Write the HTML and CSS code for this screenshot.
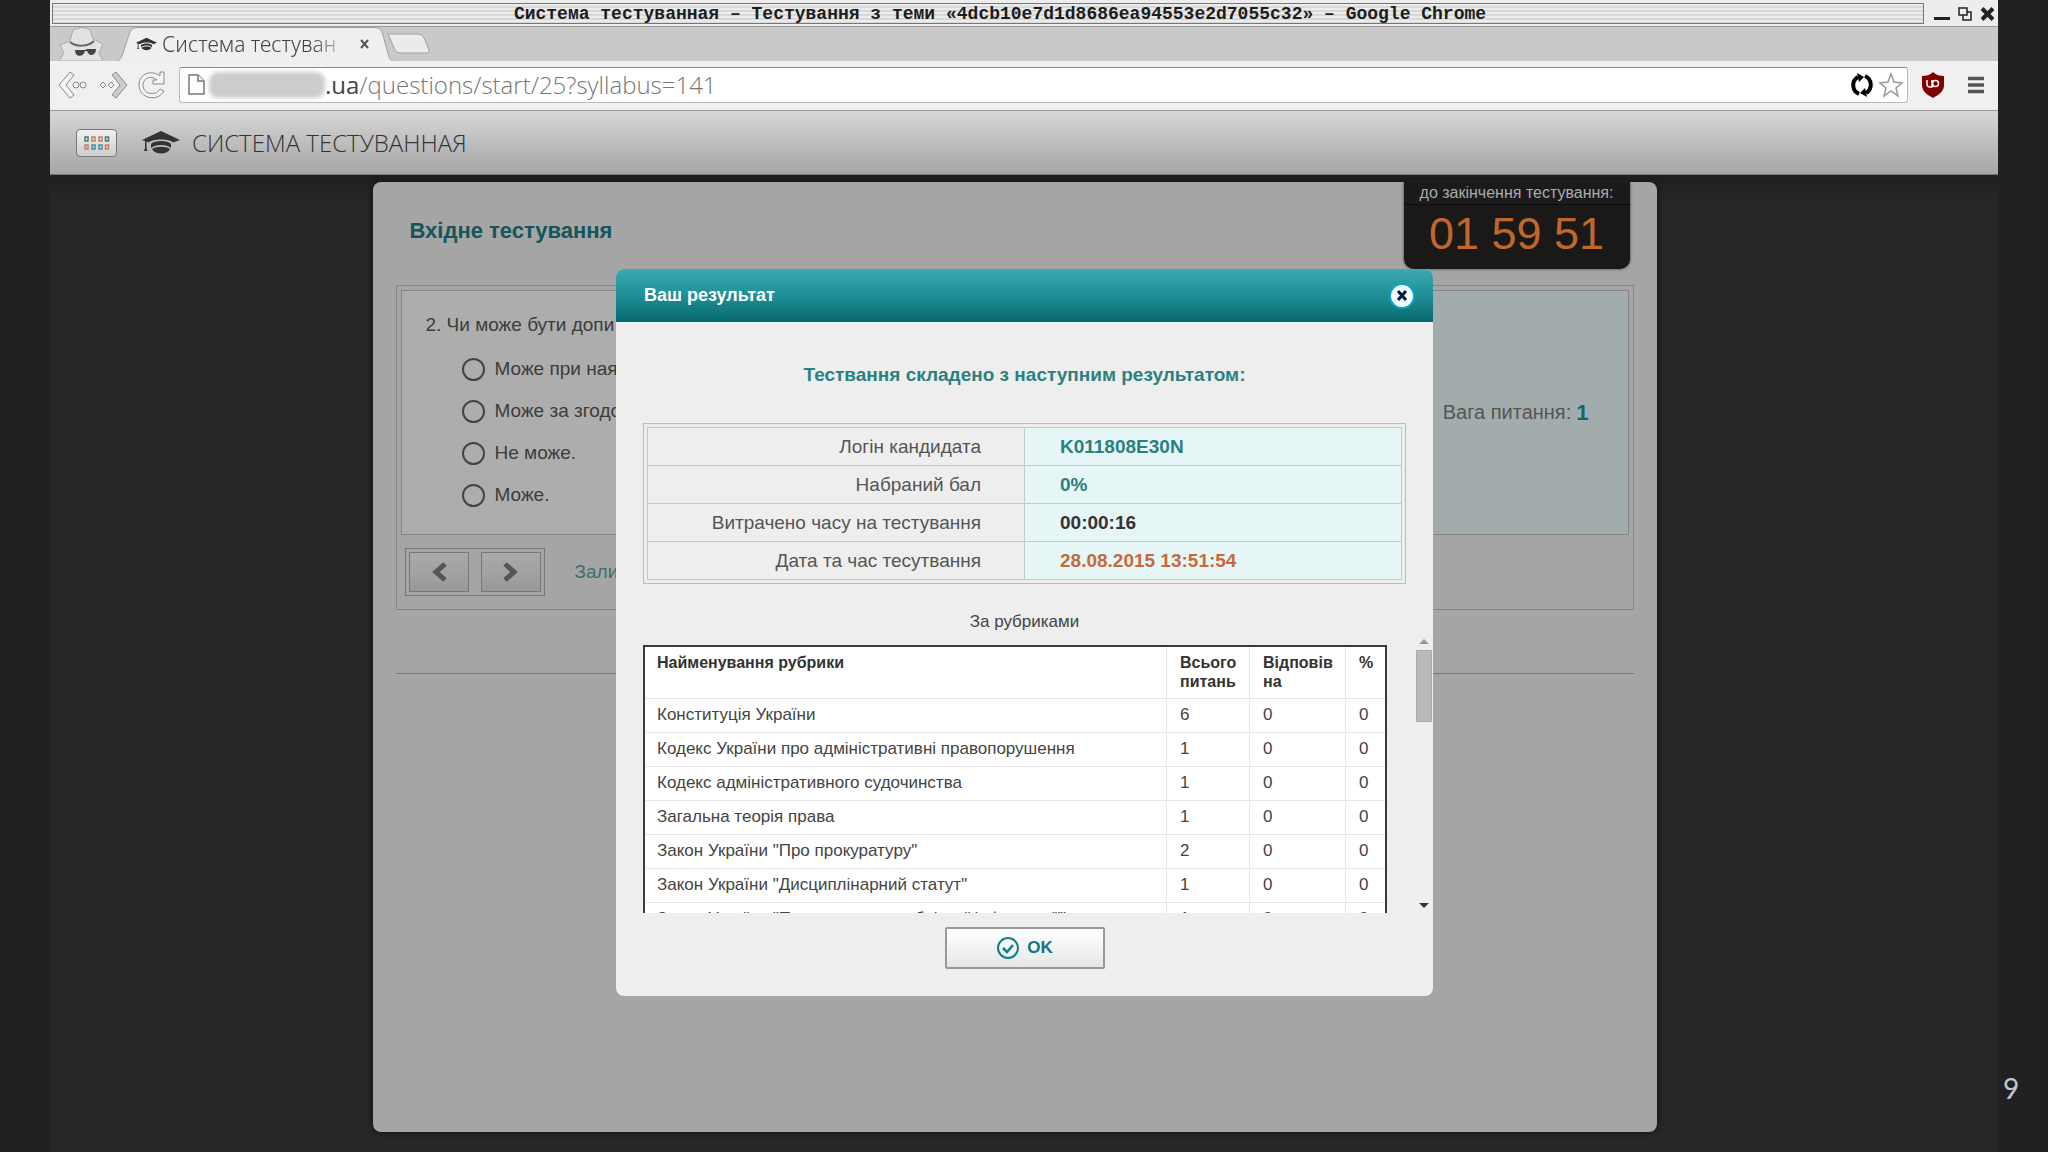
FILE: index.html
```html
<!DOCTYPE html>
<html lang="uk">
<head>
<meta charset="utf-8">
<title>Система тестуванная</title>
<link rel="stylesheet" href="styles.css">
</head>
<body>
<svg class="defs" width="0" height="0" aria-hidden="true">
  <symbol id="cap" viewBox="0 0 38 24">
    <path d="M19 0 38 9 31 11.500C28 7.500 10 7.500 7 11.500L4.500 10.500V17L5.500 20H2L3 17V10L0 9Z"/>
    <path d="M9 13c3-4 17-4 20 0v4c-4-4-16-4-20 0Z"/>
    <path d="M10 18c4-3 14-3 18 0-3 6-15 6-18 0Z"/>
  </symbol>
</svg>
<div class="slide">
  <div class="window">
    <header class="titlebar">
      <div class="caption">Система тестуванная – Тестування з теми «4dcb10e7d1d8686ea94553e2d7055c32» – Google Chrome</div>
      <div class="controls">
        <button aria-label="Згорнути"><svg width="16" height="14" viewBox="0 0 16 14"><path d="M0 11.500h16" stroke="#222" stroke-width="3"/></svg></button>
        <button aria-label="Розгорнути"><svg width="14" height="14" viewBox="0 0 14 14" fill="#eee" stroke="#222" stroke-width="1.500"><path d="M5 5h8v8H5z"/><path d="M1 1h8v7H1z"/></svg></button>
        <button aria-label="Закрити"><svg width="15" height="14" viewBox="0 0 15 14"><path d="M2 1.500l11 11M13 1.500l-11 11" stroke="#222" stroke-width="4"/></svg></button>
      </div>
    </header>

    <div class="tabs">
      <svg class="incognito" width="48" height="34" viewBox="0 0 48 34">
        <path d="M1 34l5-8-4-8 10-4 3-11c7-3 12-3 17 0l3 9 10 5-4 9 4 8Z" fill="#e2e2e2" stroke="#aaa"/>
        <path d="M12 15c6 5 18 5 24-1" fill="none" stroke="#666" stroke-width="2"/>
        <path d="M17 23h10l2-1h9c0 7-7 8-9 2h-2c-1 6-10 7-10-1Z" fill="#444"/>
      </svg>
      <div class="tab">
        <svg class="tab-shape" viewBox="0 0 276 34" preserveAspectRatio="none"><path d="M0 34C5 33 5 28 13 5q2-4.500 7-4.500H258q5 0 7 4.500C272 28 271 33 276 34" fill="#efefef" stroke="#a0a0a0"/></svg>
        <svg class="favicon" width="21" height="15"><use href="#cap"/></svg>
        <span class="tab-title">Система тестуван</span>
        <button class="tab-close" aria-label="Закрити вкладку"><svg width="9" height="10" viewBox="0 0 9 10"><path d="M1 1l7 8M8 1L1 9" stroke="#555" stroke-width="2"/></svg></button>
      </div>
      <svg class="newtab" width="44" height="22" viewBox="0 0 44 22"><path d="M1 1h30q4 0 6 4l5 12q1 3-3 3H13q-4 0-5-3Z" fill="#ebebeb" stroke="#a0a0a0"/></svg>
    </div>

    <nav class="toolbar">
      <button aria-label="Назад"><svg width="30" height="28" viewBox="0 0 30 28" fill="#f4f4f4" stroke="#8a8a8a"><path d="M12 1 1 14l11 13 4-3-8-10 8-10Z"/><circle cx="18" cy="14" r="3"/><circle cx="25" cy="14" r="3"/></svg></button>
      <button aria-label="Вперед"><svg width="30" height="28" viewBox="0 0 30 28" fill="#ccc" stroke="#8a8a8a"><path d="M18 1 29 14 18 27l-4-3 8-10-8-10Z"/><path d="M5 11l3 3-3 3-3-3ZM13 11l3 3-3 3-3-3Z" fill="#f4f4f4"/></svg></button>
      <button aria-label="Оновити"><svg width="28" height="28" viewBox="0 0 28 28" fill="#f4f4f4" stroke="#8a8a8a"><path d="M22 5V1h4v12H15V9h4C12 3 5 8 5 14c0 9 12 12 17 4l4 2C19 32 1 27 1 14 1 3 13-2 22 5Z"/></svg></button>
      <div class="omnibox">
        <svg width="17" height="21" viewBox="0 0 17 21" fill="#fff" stroke="#777" stroke-width="1.500"><path d="M1 1h9l6 6v13H1Z"/><path d="M10 1v6h6"/></svg>
        <span class="smudge"></span>
        <span class="url"><b>.ua</b>/questions/start/25?syllabus=141</span>
        <svg width="24" height="26" viewBox="0 0 24 26"><g fill="none" stroke="#000" stroke-width="4"><path d="M9 22C2 19 1 9 8 5"/><path d="M15 4c7 3 8 13 1 17"/></g><path d="M7 1l7 4-5 5ZM17 25l-7-4 5-5Z"/></svg>
        <svg width="26" height="26" viewBox="0 0 26 26"><path d="M13 2l3 8 8 1-6 5 2 8-7-5-7 5 2-8-6-5 8-1Z" fill="#fff" stroke="#999" stroke-width="1.500"/></svg>
      </div>
      <button class="shield" aria-label="uBlock"><svg width="24" height="26" viewBox="0 0 24 26"><path d="M12 0c3 3 7 4 11 4v9c0 7-6 10-11 13C7 23 1 20 1 13V4c4 0 8-1 11-4Z" fill="#800000"/><path d="M6 8v4q0 3 3 3h2V8M14.500 8.500a3 3 0 1 1 0 6q-3 0-3-3t3-3" fill="none" stroke="#fff" stroke-width="1.500"/></svg></button>
      <button class="menu" aria-label="Меню"><svg width="18" height="18" viewBox="0 0 18 18"><path d="M1 2.500h16M1 9h16M1 15.500h16" stroke="#555" stroke-width="3.500"/></svg></button>
    </nav>

    <div class="site-header">
      <button class="apps" aria-label="Додатки">
        <svg width="26" height="14" viewBox="0 0 26 14" fill="none" stroke-width="1.500"><g stroke="#4b7a70"><path d="M1 1h3v4H1zM21.500 1h3v4h-3z"/></g><g stroke="#c08060"><path d="M8 1h3v4H8zM15 1h3v4h-3zM1 9h3v4H1zM21.500 9h3v4h-3z"/></g><g stroke="#4a8aa8"><path d="M8 9h3v4H8zM15 9h3v4h-3z"/></g></svg>
      </button>
      <svg class="brand-icon" width="38" height="24"><use href="#cap"/></svg>
      <span class="brand">СИСТЕМА ТЕСТУВАННАЯ</span>
    </div>

    <main class="stage">
      <section class="panel">
        <div class="panel-head">
          <h1>Вхідне тестування</h1>
          <div class="timer">
            <div class="timer-label">до закінчення тестування:</div>
            <div class="timer-value">01 59 51</div>
          </div>
        </div>
        <div class="frame">
          <div class="question">
            <form class="answers">
              <p>2. Чи може бути допи</p>
              <label><input type="radio" name="a">Може при ная</label>
              <label><input type="radio" name="a">Може за згодо</label>
              <label><input type="radio" name="a">Не може.</label>
              <label><input type="radio" name="a">Може.</label>
            </form>
            <div class="weight">Вага питання: <b>1</b></div>
          </div>
          <div class="pager">
            <div class="pager-box">
              <button aria-label="Попереднє"><svg width="18" height="20" viewBox="0 0 18 20"><path d="M15 2 6 10l9 8" fill="none" stroke="#555" stroke-width="5"/></svg></button>
              <button aria-label="Наступне"><svg width="18" height="20" viewBox="0 0 18 20"><path d="M3 2l9 8-9 8" fill="none" stroke="#555" stroke-width="5"/></svg></button>
            </div>
            <a href="#">Зали</a>
          </div>
        </div>
        <hr>
      </section>
    </main>

    <div class="modal" role="dialog" aria-label="Ваш результат">
      <div class="modal-head">
        <h2>Ваш результат</h2>
        <button aria-label="Закрити"><svg width="12" height="13" viewBox="0 0 12 13"><path d="M2 2l8 9M10 2l-8 9" stroke="#061a3a" stroke-width="3"/></svg></button>
      </div>
      <div class="modal-body">
        <h3>Тествання складено з наступним результатом:</h3>
        <div class="result-box">
          <table class="result">
            <tr><th>Логін кандидата</th><td class="teal">K011808E30N</td></tr>
            <tr><th>Набраний бал</th><td class="teal">0%</td></tr>
            <tr><th>Витрачено часу на тестування</th><td>00:00:16</td></tr>
            <tr><th>Дата та час тесутвання</th><td class="orange">28.08.2015 13:51:54</td></tr>
          </table>
        </div>
        <p class="subtitle">За рубриками</p>
        <div class="rubrics">
          <div class="viewport">
            <table>
              <colgroup><col><col class="c-total"><col class="c-ok"><col class="c-pct"></colgroup>
              <thead><tr><th>Найменування рубрики</th><th>Всього питань</th><th>Відповів на</th><th>%</th></tr></thead>
              <tbody>
                <tr><td>Конституція України</td><td>6</td><td>0</td><td>0</td></tr>
                <tr><td>Кодекс України про адміністративні правопорушення</td><td>1</td><td>0</td><td>0</td></tr>
                <tr><td>Кодекс адміністративного судочинства</td><td>1</td><td>0</td><td>0</td></tr>
                <tr><td>Загальна теорія права</td><td>1</td><td>0</td><td>0</td></tr>
                <tr><td>Закон України "Про прокуратуру"</td><td>2</td><td>0</td><td>0</td></tr>
                <tr><td>Закон України "Дисциплінарний статут"</td><td>1</td><td>0</td><td>0</td></tr>
                <tr><td>Закон України "Про доступ до публічної інформації"</td><td>1</td><td>0</td><td>0</td></tr>
              </tbody>
            </table>
          </div>
          <div class="scrollbar"><i class="up"></i><i class="thumb"></i><i class="down"></i></div>
        </div>
        <button class="ok"><svg width="24" height="24" viewBox="0 0 24 24" fill="none" stroke="#0f7f85" stroke-width="2"><circle cx="12" cy="12" r="10"/><path d="M7 12l4 4 6-7" stroke-width="2.500"/></svg>OK</button>
      </div>
    </div>
  </div>
  <div class="page-number">9</div>
</div>
</body>
</html>
```

FILE: styles.css
```css
* { box-sizing: border-box; }
body {
  margin: 0;
  background: #212022;
  font-family: "Liberation Sans", Arial, sans-serif;
  color: #444;
}
button { border: 0; padding: 0; background: none; font: inherit; color: inherit; }
svg { display: block; flex: none; }
.defs { position: absolute; }
h1, h2, h3, p { margin: 0; }

.slide {
  display: grid;
  grid-template-columns: 50px 1fr 50px;
  min-height: 100vh;
}
.window {
  grid-column: 2;
  position: relative;
  display: flex;
  flex-direction: column;
  min-width: 0;
  background: #272628;
}
.page-number {
  align-self: end;
  padding: 0 0 46px 5px;
  font: 28px/36px Lato, sans-serif;
  color: #c8c8c8;
}

/* window title */
.titlebar {
  display: flex;
  height: 27px;
  padding: 3px 3px 2px 2px;
  background: #ededed;
  border-bottom: 1px solid #999;
}
.caption {
  flex: 1;
  padding-left: 24px;
  border: 1px solid #777;
  background: repeating-linear-gradient(#ececec 0 2px, #d8d8d8 2px 4px);
  font: bold 18px/21px "Liberation Mono", monospace;
  text-align: center;
  white-space: nowrap;
  color: #1c1c1c;
}
.controls {
  display: flex;
  align-items: center;
  gap: 8px;
  padding-left: 10px;
}

/* tab strip */
.tabs {
  display: flex;
  height: 34px;
  padding-left: 8px;
  background: #c9c9c9;
}
.tab {
  position: relative;
  display: flex;
  align-items: center;
  width: 276px;
  margin-left: 11px;
  padding: 0 24px 0 19px;
}
.tab-shape { position: absolute; inset: 0; width: 100%; height: 100%; }
.favicon { position: relative; fill: #333; }
.tab-title {
  position: relative;
  flex: 1;
  overflow: hidden;
  margin: 0 10px 0 5px;
  font: 300 21px/30px "Noto Sans", sans-serif;
  white-space: nowrap;
  color: #444;
  mask-image: linear-gradient(90deg, #000 80%, transparent);
}
.tab-close { position: relative; }
.newtab { margin: 6px 0 0 -6px; }

/* toolbar */
.toolbar {
  display: flex;
  align-items: center;
  gap: 10px;
  height: 50px;
  padding: 0 13px 2px 8px;
  background: #f0f0f0;
  border-bottom: 1px solid #999;
}
.omnibox {
  flex: 1;
  display: flex;
  align-items: center;
  height: 36px;
  margin-left: 3px;
  padding: 0 3px 0 8px;
  border: 1px solid #bbb;
  border-top-color: #888;
  border-radius: 3px;
  background: #fff;
}
.smudge {
  width: 116px;
  height: 26px;
  margin-left: 4px;
  border-radius: 9px;
  background: #ccc;
  filter: blur(2px);
}
.url {
  flex: 1;
  font: 300 24px/32px "Open Sans", sans-serif;
  color: #777;
  white-space: nowrap;
}
.url b { font-weight: 400; color: #444; }
.omnibox svg + svg { margin-left: 4px; }
.shield { margin-left: 3px; }
.menu { margin-left: 12px; }

/* site header */
.site-header {
  display: flex;
  align-items: center;
  height: 64px;
  padding-left: 26px;
  background: linear-gradient(#d6d6d7, #a6a6a7);
  border-bottom: 1px solid #777;
}
.apps {
  display: grid;
  place-items: center;
  width: 41px;
  height: 28px;
  border: 1px solid #777;
  border-radius: 4px;
  background: linear-gradient(#f2f2f2, #ccc);
}
.brand-icon { margin: 0 12px 0 25px; fill: #333; }
.brand { font: 300 24px/32px "Open Sans", sans-serif; color: #333; }

/* page */
.stage {
  flex: 1;
  display: flex;
  justify-content: center;
  padding: 7px 19px 20px 0;
  background: linear-gradient(#1f1f20, #272628 30px);
}
.panel {
  width: 1284px;
  padding: 0 23px;
  border-radius: 8px;
  background: #a5a5a5;
  box-shadow: 0 0 6px #111;
}
.panel-head {
  display: flex;
  justify-content: space-between;
  align-items: flex-start;
  height: 103px;
  padding: 0 4px 0 14px;
}
h1 { padding-top: 35px; font-size: 22px; line-height: 28px; color: #14565b; }
.timer {
  width: 226px;
  height: 87px;
  border-radius: 0 0 10px 10px;
  background: #1a1918;
  text-align: center;
  box-shadow: 0 0 3px #333;
}
.timer-label {
  font-size: 16px;
  line-height: 22px;
  background: #1b1b1d;
  border-bottom: 1px solid #0b0b0b;
  color: #aaa;
}
.timer-value { font-size: 45px; line-height: 57px; color: #c0682c; }
.frame { padding: 4px; border: 1px solid #858585; }
.question {
  display: grid;
  grid-template-columns: 1fr 240px;
  border: 1px solid #858585;
  background: #adadad;
}
.answers {
  display: flex;
  flex-direction: column;
  gap: 14px;
  padding: 20px 24px 25px;
  font-size: 19px;
  line-height: 28px;
  color: #3c3c3c;
}
.answers p { margin-bottom: 2px; }
.answers label { display: flex; align-items: center; gap: 10px; padding-left: 36px; }
.answers input {
  appearance: none;
  width: 23px;
  height: 23px;
  margin: 0;
  border: 2px solid #444;
  border-radius: 50%;
}
.weight {
  display: flex;
  align-items: center;
  justify-content: flex-end;
  gap: 5px;
  padding-right: 39px;
  background: #a2acad;
  font-size: 20px;
  color: #555;
}
.weight b { font-size: 22px; color: #14656b; }
.pager { display: flex; align-items: center; gap: 30px; padding: 13px 0 9px 4px; }
.pager-box { display: flex; gap: 12px; padding: 3px; border: 1px solid #777; }
.pager-box button {
  display: grid;
  place-items: center;
  width: 60px;
  height: 40px;
  border: 1px solid #777;
  background: linear-gradient(#aaa, #999);
}
.pager a { font-size: 19px; color: #39716f; text-decoration: none; }
hr { margin: 63px 0 0; border: 0; border-top: 1px solid #777; }

/* result dialog */
.modal {
  position: absolute;
  top: 269px;
  left: 1px;
  right: 0;
  width: 817px;
  max-width: 100%;
  margin: 0 auto;
  border-radius: 8px;
  background: #eeeeee;
  overflow: hidden;
}
.modal-head {
  display: flex;
  align-items: center;
  justify-content: space-between;
  height: 53px;
  padding: 0 18px 0 28px;
  background: linear-gradient(#3caab0, #22929a 45%, #07696f);
}
.modal-head h2 { font-size: 18px; color: #fff; }
.modal-head button {
  display: grid;
  place-items: center;
  width: 26px;
  height: 26px;
  border: 2px solid #0aa5c4;
  border-radius: 50%;
  background: #f2ffff;
}
.modal-body {
  display: flex;
  flex-direction: column;
  padding: 40px 0 27px 27px;
}
.modal-body h3 {
  padding-right: 27px;
  font-size: 19px;
  line-height: 26px;
  text-align: center;
  color: #2b8080;
}
.result-box {
  margin: 35px 27px 0 0;
  padding: 3px;
  border: 1px solid #bbb;
}
.result { width: 100%; table-layout: fixed; border-collapse: collapse; font-size: 19px; }
.result th, .result td { height: 38px; padding: 0 43px; border: 1px solid #c4c8c8; }
.result th { text-align: right; font-weight: 400; color: #555; }
.result td { padding-left: 35px; font-weight: 700; background: #e6f6f7; color: #333; }
.result .teal { color: #2b8080; }
.result .orange { color: #c76a3a; }
.subtitle {
  padding: 26px 27px 11px 0;
  font-size: 17px;
  line-height: 24px;
  text-align: center;
}
.rubrics { display: flex; justify-content: space-between; height: 268px; }
.viewport { flex: 1; overflow: hidden; }
.viewport table {
  width: 100%;
  table-layout: fixed;
  border: 2px solid #3a3a3a;
  border-spacing: 0;
  background: #fff;
  font-size: 17px;
}
.c-total { width: 83px; }
.c-ok { width: 96px; }
.c-pct { width: 40px; }
.viewport th, .viewport td {
  padding: 0 0 0 13px;
  border: 0 solid #e9e6e9;
  border-width: 0 0 1px 1px;
  text-align: left;
}
.viewport th:first-child, .viewport td:first-child { padding-left: 12px; border-left: 0; }
.viewport th { height: 52px; padding-top: 6px; vertical-align: top; font-size: 16px; line-height: 19px; color: #333; }
.viewport td { height: 34px; padding-bottom: 2px; line-height: 24px; white-space: nowrap; }
.scrollbar {
  display: flex;
  flex-direction: column;
  width: 16px;
  margin: -6px 1px 5px 29px;
}
.scrollbar i { border: 5px solid transparent; align-self: center; }
.scrollbar .up { border-top: 0; border-bottom-color: #999; }
.scrollbar .thumb { width: 16px; height: 72px; margin-top: 6px; border: 1px solid #aaa; background: #b9b9b9; }
.scrollbar .down { margin-top: auto; border-bottom: 0; border-top-color: #333; }
.ok {
  display: flex;
  align-items: center;
  justify-content: center;
  gap: 7px;
  align-self: center;
  width: 160px;
  height: 42px;
  margin: 14px 27px 0 0;
  border: 2px solid #999;
  border-radius: 2px;
  background: linear-gradient(#fff, #e4e7ea);
  font-size: 17px;
  font-weight: 700;
  color: #14757a;
}
```
